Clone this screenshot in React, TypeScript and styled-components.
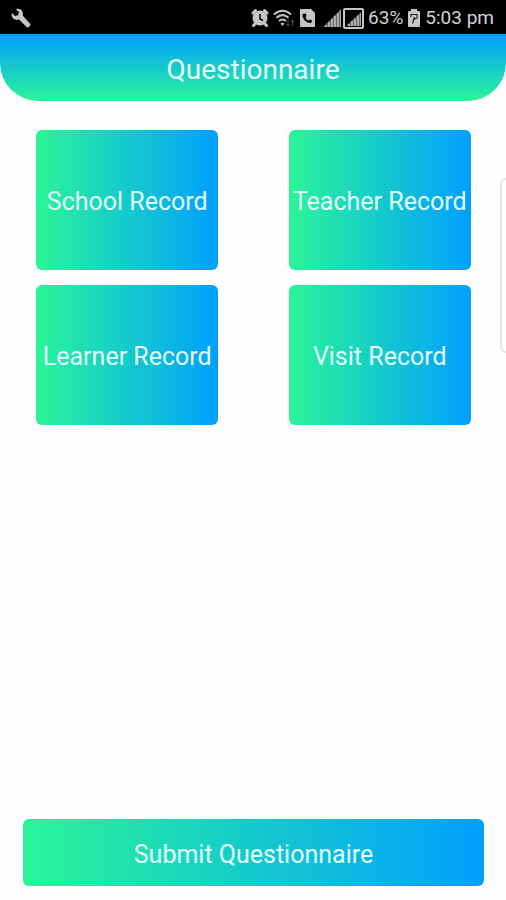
import React from "react";
import styled, { createGlobalStyle } from "styled-components";

const GlobalStyle = createGlobalStyle`
  * { box-sizing: border-box; }
  body {
    margin: 0;
    background: #fefefe;
    font-family: Roboto, "Liberation Sans", sans-serif;
  }
`;

const Screen = styled.div`
  position: relative;
  display: flex;
  flex-direction: column;
  min-height: 100vh;
  overflow: hidden;
`;

const StatusBar = styled.div`
  display: flex;
  align-items: center;
  justify-content: space-between;
  height: 34px;
  padding: 2px 12px 0 11px;
  background: #000;
  color: #d0d0d0;
  font-size: 19px;
  line-height: 24px;
`;

const StatusGroup = styled.div`
  display: flex;
  align-items: center;
  gap: 4px;
  white-space: nowrap;

  svg {
    display: block;
    flex: none;
  }
`;

const SignalPair = styled.span`
  display: flex;
  gap: 1px;
  padding-left: 4px;
`;

const Header = styled.header`
  display: flex;
  align-items: center;
  justify-content: center;
  height: 67px;
  padding-top: 4px;
  border-radius: 0 0 38px 38px;
  background: linear-gradient(180deg, #009fff, #2af598);
`;

const Title = styled.h1`
  margin: 0;
  color: #e6ffff;
  font-size: 28px;
  font-weight: 400;
  line-height: 32px;
`;

const Records = styled.main`
  display: grid;
  grid-template-columns: 1fr 1fr;
  justify-items: center;
  gap: 15px 0;
  padding: 29px 0 15px 1px;
`;

const GradientButton = styled.button`
  border: 0;
  border-radius: 6px;
  padding: 4px 0 0;
  background: linear-gradient(90deg, #2af598, #009fff);
  color: #e0ffff;
  font-family: inherit;
  font-size: 25px;
  line-height: 32px;
  white-space: nowrap;
  cursor: pointer;
`;

const RecordCard = styled(GradientButton)`
  width: 72%;
  height: 140px;
`;

const Footer = styled.footer`
  display: flex;
  margin-top: auto;
  padding: 0 22px 14px 23px;
`;

const SubmitButton = styled(GradientButton)`
  flex: 1;
  height: 67px;
`;

const EdgeHandle = styled.div`
  position: absolute;
  top: 178px;
  right: 0;
  width: 6px;
  height: 175px;
  border: 2px solid #e6e6e6;
  border-right: 0;
  border-radius: 6px 0 0 6px;
`;

const ink = "#c6c6c6";

const WrenchIcon = () => (
  <svg width="20" height="20" viewBox="0 0 20 20" aria-hidden="true">
    <path
      d="M5 1.2C7.600 .2 10.600 1.400 11.600 4c.5 1.300.5 2.500.1 3.600l7 7.700a2 2 0 0 1 0 2.800l-.6.6a2 2 0 0 1-2.800 0l-7.200-7.200C5 12.700 1.800 11.200.8 8.300.4 7.200.4 6 .8 4.900L4 8.100 7 7.200 8 4.300z"
      fill={ink}
    />
  </svg>
);

const AlarmIcon = () => (
  <svg width="18" height="20" viewBox="0 0 18 20" aria-hidden="true">
    <g stroke={ink} strokeWidth="3" strokeLinecap="round">
      <path d="M2 5l2.500-2.500M16 5l-2.500-2.500M4 16l-1.500 1.500M14 16l1.500 1.500" />
    </g>
    <circle cx="9" cy="10" r="7.5" fill={ink} />
    <path d="M9 6v5l3 1.500" fill="none" stroke="#000" strokeWidth="1.5" />
  </svg>
);

const WifiIcon = () => (
  <svg width="22" height="20" viewBox="0 0 22 20" fill="none" aria-hidden="true">
    <g stroke={ink} strokeWidth="2">
      <path d="M1 6.500Q9.500 -1 18 6.500" />
      <path d="M3.500 9.800Q9.500 4.500 15.500 9.800" />
      <path d="M6 13Q9.500 10 13 13" />
    </g>
    <path d="M7.500 15.500Q9.500 14 11.500 15.500L9.500 18z" fill={ink} />
    <path d="M15 12v6M13.500 16l1.500 2 1.500-2M19.500 18v-6M18 14l1.500-2 1.500 2" stroke="#505050" />
  </svg>
);

const CallIcon = () => (
  <svg width="16" height="18" viewBox="0 0 16 18" aria-hidden="true">
    <path d="M2 0h10l4 4v13a1 1 0 0 1-1 1H2a1 1 0 0 1-1-1V1a1 1 0 0 1 1-1z" fill={ink} />
    <path
      d="M3.500 5.500c-.5 4 3.500 9 8.500 8.500q1-.3 1-2.500l-2.500-1-1.500 1C7.800 10.800 7 9.800 6.500 8.500L7.500 7 6.500 4.500Q4 4.500 3.500 5.500z"
      fill="#000"
    />
  </svg>
);

const SignalIcon = () => (
  <svg width="19" height="20" viewBox="0 0 19 20" aria-hidden="true">
    <path d="M0 19L18 1v18z" fill="#666" />
    <path d="M2 17h2v2H2zM5 14h2v5H5zM8 11h2v8H8zM11 8h2v11h-2zM14 5h2v14h-2zM17 2h1v17h-1z" fill="#aaa" />
  </svg>
);

const BoxedSignalIcon = () => (
  <svg width="21" height="21" viewBox="0 0 21 21" aria-hidden="true">
    <rect x="1" y="1" width="19" height="19" rx="1" fill="none" stroke={ink} strokeWidth="2" />
    <path d="M3 18L18 4v14z" fill="#666" />
    <path d="M5 16h2v2H5zM8 13h2v5H8zM11 10.500h2V18h-2zM14 7.500h2V18h-2zM17 5h1v13h-1z" fill="#aaa" />
  </svg>
);

const BatteryIcon = () => (
  <svg width="14" height="18" viewBox="0 0 14 18" aria-hidden="true">
    <path d="M4 0h6v2h2a1 1 0 0 1 1 1v14a1 1 0 0 1-1 1H2a1 1 0 0 1-1-1V3a1 1 0 0 1 1-1h2z" fill={ink} />
    <path d="M4 8V5.500h6v3.500L7 10.500M7.500 8L5.500 14.500" fill="none" stroke="#222" strokeWidth="1.200" />
  </svg>
);

const records = ["School Record", "Teacher Record", "Learner Record", "Visit Record"];

export default function App() {
  return (
    <Screen>
      <GlobalStyle />
      <StatusBar>
        <StatusGroup>
          <WrenchIcon />
        </StatusGroup>
        <StatusGroup>
          <AlarmIcon />
          <WifiIcon />
          <CallIcon />
          <SignalPair>
            <SignalIcon />
            <BoxedSignalIcon />
          </SignalPair>
          <span>63%</span>
          <BatteryIcon />
          <span>5:03 pm</span>
        </StatusGroup>
      </StatusBar>
      <Header>
        <Title>Questionnaire</Title>
      </Header>
      <Records>
        {records.map((name) => (
          <RecordCard key={name} type="button">
            {name}
          </RecordCard>
        ))}
      </Records>
      <Footer>
        <SubmitButton type="button">Submit Questionnaire</SubmitButton>
      </Footer>
      <EdgeHandle />
    </Screen>
  );
}
